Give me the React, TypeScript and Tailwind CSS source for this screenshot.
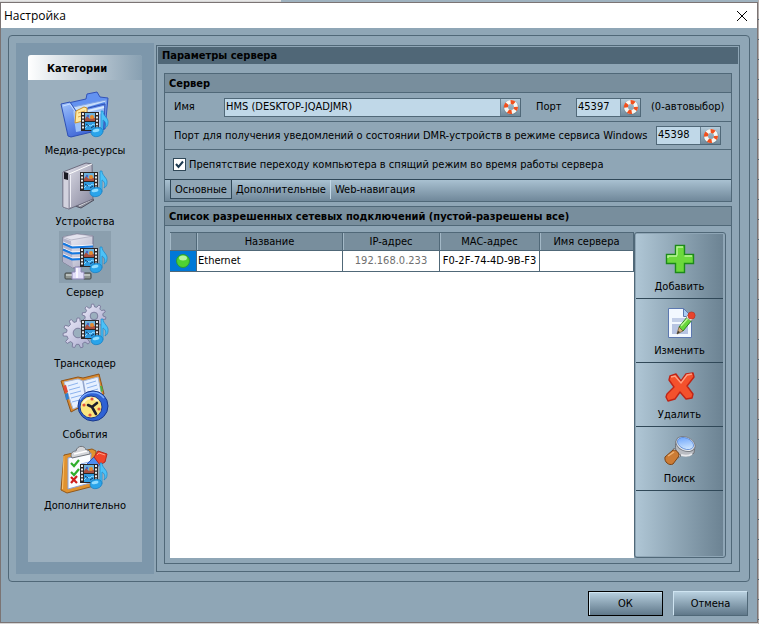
import { useState } from "react";
import type { ReactNode } from "react";

function MediaBadge({ x, y }: { x: number; y: number }) {
  return (
    <g transform={`translate(${x} ${y})`}>
      <rect x="0" y="0" width="18" height="19" fill="#2b2626" />
      <rect x="4" y="1" width="10" height="8" fill="#6db2dc" />
      <rect x="4" y="10" width="10" height="8" fill="#2f9be0" />
      <path d="M4 7l2-3 3 3 2-2 3 1v3H4z" fill="#a8503f" />
      <circle cx="11" cy="5" r="2" fill="#e8892c" />
      <circle cx="7" cy="4" r="1.2" fill="#4d62c8" />
      <path d="M4 16l3-3 3 1 2-2 2 1" stroke="#8ad8ff" fill="none" />
      <path d="M5 12l3 2M10 16l3-2" stroke="#123e6c" />
      <path d="M2 1v17M16 1v17" stroke="#e9eaee" strokeWidth="2" strokeDasharray="2 1.4" />
      <path
        d="M20 -1h2c0 5 6 7 5 12 0 2-1 4-3 5 2-4 0-7-2-8v12h-2z"
        fill="#4cc2f7"
        stroke="#1a86c8"
        strokeWidth="0.7"
      />
      <ellipse cx="16" cy="20" rx="6" ry="4.600" transform="rotate(-14 16 20)" fill="#2aa4ea" stroke="#1a7fc2" strokeWidth="0.7" />
      <ellipse cx="15" cy="18.500" rx="3.500" ry="1.600" transform="rotate(-14 15 18.500)" fill="#8fdcff" />
    </g>
  );
}

function FolderIcon() {
  return (
    <svg width="52" height="52" viewBox="0 0 52 52">
      <defs>
        <linearGradient id="folder" x1="0" y1="0" x2="0.6" y2="1">
          <stop offset="0" stopColor="#a4c6fb" />
          <stop offset="0.5" stopColor="#668fec" />
          <stop offset="1" stopColor="#3a5fd0" />
        </linearGradient>
      </defs>
      <path d="M9 14L27 10l1-5 10-2 3 5 8 1-3 31-36 7z" fill="#6392f0" stroke="#3353b8" />
      <path d="M14 18L47 11l-2 28-29 4z" fill="#c5dcfb" stroke="#7fa3e4" />
      <path d="M29 19l17-5M31 23l14-4" stroke="#4f82e6" strokeWidth="2" />
      <path d="M2 15l9-2 6 9 29-7-1 25-33 8-3-1z" fill="url(#folder)" stroke="#2e50b5" />
      <path d="M14 22l4 1 27-6-1 21-27 5z" fill="#9dc1f8" />
      <path d="M29 22l16-4M30 26l14-3" stroke="#d8eaff" strokeWidth="2" />
      <path d="M4 17l7-2 6 9" stroke="#c8deff" fill="none" />
      <path d="M17 22l8-4 3 1v12l-12 3z" fill="#ffe9a0" stroke="#c9922e" />
      <path d="M19 24l7-2M19 28l6-2" stroke="#d9a545" />
      <MediaBadge x={22} y={23} />
    </svg>
  );
}

function DeviceIcon() {
  return (
    <svg width="52" height="52" viewBox="0 0 52 52">
      <defs>
        <linearGradient id="drive" x1="0" y1="0" x2="1" y2="1">
          <stop offset="0" stopColor="#e4e4ee" />
          <stop offset="0.5" stopColor="#b4b4c4" />
          <stop offset="1" stopColor="#85859c" />
        </linearGradient>
      </defs>
      <path d="M16 46l15-8 4 2-13 8z" fill="#8d8f9c" stroke="#4d4f5e" />
      <path d="M20 46l12-6" stroke="#e3e3ea" />
      <path d="M4 12L27 3l6 1 1 35L10 49l-6-2z" fill="url(#drive)" stroke="#6d6d80" />
      <path d="M4 12l6 2v35l-6-2z" fill="#d2d2de" stroke="#78788c" strokeWidth="0.7" />
      <path d="M10 14L33 4" stroke="#ffffff" />
      <path d="M5 12l4 1v7l-4-1z" fill="#1a1a24" />
      <path d="M11.500 15v32" stroke="#efeff6" />
      <MediaBadge x={21} y={12} />
    </svg>
  );
}

function ServerIcon() {
  return (
    <svg width="52" height="52" viewBox="0 0 52 52">
      <defs>
        <linearGradient id="srv" x1="0" y1="0" x2="1" y2="1">
          <stop offset="0" stopColor="#f4f4fb" />
          <stop offset="0.6" stopColor="#c9c9d9" />
          <stop offset="1" stopColor="#9c9cb4" />
        </linearGradient>
      </defs>
      <path d="M4 6l14-3 16 2v29l-20 3-10-6z" fill="url(#srv)" stroke="#74748e" />
      <path d="M4 7l8 3 2 27-10-6z" fill="#b3b3ca" />
      <path d="M4 6l14-3 16 2-22 4z" fill="#e3e3ee" stroke="#9c9cb0" strokeWidth="0.6" />
      <path d="M4 11l9 4 21-1M4 17l9 4 21-1M4 23l9 4 21-1" stroke="#f9faff" fill="none" />
      <path d="M4 12.500l9 4 21-1M4 18.500l9 4 21-1M4 24.500l9 4 21-1" stroke="#1478e0" strokeWidth="2" fill="none" />
      <rect x="6" y="42" width="8" height="6" rx="1" fill="#8f9693" stroke="#3f4442" />
      <rect x="24" y="42" width="8" height="6" rx="1" fill="#8f9693" stroke="#3f4442" />
      <path d="M16 36h6v5h3v7H13v-7h3z" fill="#e2defa" stroke="#8c86b4" />
      <path d="M7 44h6M25 44h6" stroke="#e6ebe8" />
      <path d="M18 37v10" stroke="#ffffff" strokeWidth="1.500" />
      <MediaBadge x={21} y={17} />
    </svg>
  );
}

function Gear({ cx, cy, r, teeth }: { cx: number; cy: number; r: number; teeth: number }) {
  const points: string[] = [];
  for (let i = 0; i < teeth; i++) {
    const base = (i / teeth) * Math.PI * 2;
    const step = (Math.PI * 2) / teeth;
    const corners: [number, number][] = [
      [0, 0.76],
      [0.15, 1],
      [0.45, 1],
      [0.6, 0.76],
    ];
    corners.forEach(([t, k]) => {
      const a = base + step * t;
      points.push(`${(cx + Math.cos(a) * r * k).toFixed(1)} ${(cy + Math.sin(a) * r * k).toFixed(1)}`);
    });
  }
  const h = r * 0.32;
  return (
    <path
      d={`M${points.join("L")}Z M${cx - h} ${cy}a${h} ${h} 0 1 0 ${h * 2} 0a${h} ${h} 0 1 0 ${-h * 2} 0Z`}
      fillRule="evenodd"
      fill="url(#gear)"
      stroke="#77779a"
      strokeWidth="0.9"
    />
  );
}

function TranscoderIcon() {
  return (
    <svg width="52" height="52" viewBox="0 0 52 52">
      <defs>
        <linearGradient id="gear" x1="0" y1="0" x2="1" y2="1">
          <stop offset="0" stopColor="#ecebfa" />
          <stop offset="1" stopColor="#a9a9cc" />
        </linearGradient>
      </defs>
      <Gear cx={35} cy={14} r={12} teeth={10} />
      <Gear cx={19} cy={31} r={15} teeth={11} />
      <MediaBadge x={22} y={18} />
    </svg>
  );
}

function EventsIcon() {
  return (
    <svg width="52" height="52" viewBox="0 0 52 52">
      <path d="M2 8l17-4 5 1 16-4 5 20-33 18z" fill="#d98a2e" stroke="#8f531a" />
      <path d="M5 9l14-3 5 2 15-4 4 20-29 12z" fill="#e6f0ff" stroke="#a9b8d6" />
      <path d="M24 8l4 23" stroke="#93a5cc" strokeWidth="1.5" />
      <path
        d="M9 13l10-3M10 17l11-3M11 21l11-3M12 25l11-3M13 29l11-3M27 11l10-3M28 15l10-3M29 19l10-3"
        stroke="#8db3ee"
      />
      <path d="M4 13l3-1 2 7-3 1z" fill="#e04a35" />
      <path d="M6 21l3-1 1 6-3 1z" fill="#2d7fd3" />
      <path d="M41 13l2 0 1 5-2 1z" fill="#4fb043" />
      <circle cx="34" cy="33" r="15" fill="#2f62d4" stroke="#17378c" />
      <path d="M21 27c4-8 17-11 24-2" stroke="#7fb0ff" strokeWidth="1.5" fill="none" />
      <circle cx="32" cy="34" r="11" fill="#fbe67f" stroke="#173a8e" />
      <path d="M24 31c2-6 10-8 15-3" stroke="#fff8cf" strokeWidth="2" fill="none" />
      <circle cx="25" cy="32" r="1.6" fill="#e2553b" />
      <circle cx="33" cy="26" r="1.6" fill="#e2553b" />
      <circle cx="40" cy="36" r="1.6" fill="#e2553b" />
      <circle cx="31" cy="42" r="1.6" fill="#e2553b" />
      <path d="M38 30l-5 4-4-2M33 34l4 7" stroke="#1d1d2c" strokeWidth="2.6" strokeLinecap="round" fill="none" />
    </svg>
  );
}

function ExtraIcon() {
  return (
    <svg width="52" height="52" viewBox="0 0 52 52">
      <path d="M5 11L33 5l4 2-2 35L8 49l-6-3z" fill="#e0922f" stroke="#93591a" />
      <path d="M5 12L3.500 45" stroke="#ffc56e" />
      <path d="M9 14l23-5-1 30-22 6z" fill="#fafcff" stroke="#8aa3dc" />
      <path d="M12 12c0-4 3-5 5-5 1-6 9-6 10-1 3 0 4 1 4 4l-18 4z" fill="#d4d6da" stroke="#70757c" />
      <path d="M15 10l13-3" stroke="#ffffff" strokeWidth="1.5" />
      <path d="M12 19l3 3 5-6M12 28l3 3 5-6" stroke="#2fae2c" strokeWidth="2.2" fill="none" />
      <path d="M12 33l6 6M18 32l-6 7" stroke="#cf1d1d" strokeWidth="2.2" />
      <path d="M22 20l8-2M22 29l6-2" stroke="#8fb2ee" />
      <path d="M27 21l8-8 7 6-8 9z" fill="#4f8df0" stroke="#2a53b8" />
      <path d="M35 13l4-6 9 3-2 8-5 3z" fill="#f0452c" stroke="#b52a1c" />
      <path d="M38 11l2-2 6 2" stroke="#ff9c80" fill="none" />
      <MediaBadge x={21} y={20} />
    </svg>
  );
}

function LifeRing() {
  return (
    <svg width="16" height="16" viewBox="0 0 16 16">
      <circle cx="8" cy="8.5" r="5.6" fill="none" stroke="#60707c" strokeWidth="4" opacity="0.5" />
      <circle cx="8" cy="8" r="5" fill="none" stroke="#f7f7f2" strokeWidth="4" />
      <circle
        cx="8"
        cy="8"
        r="5"
        fill="none"
        stroke="#f0501e"
        strokeWidth="4"
        strokeDasharray="3.927 3.927"
        strokeDashoffset="1"
      />
    </svg>
  );
}

function AddIcon() {
  return (
    <svg width="32" height="32" viewBox="0 0 32 32">
      <path d="M11.500 2.500h9v9h9v9h-9v9h-9v-9h-9v-9h9z" fill="#6cd93c" stroke="#1c8a1a" strokeWidth="1.4" />
      <path d="M13 12.500V4h6M4 15v-2h9M20.500 13H28" stroke="#b9f59a" strokeWidth="1.4" fill="none" />
    </svg>
  );
}

function EditIcon() {
  return (
    <svg width="32" height="32" viewBox="0 0 32 32">
      <path d="M4.500 1.500h15l8 8v21h-23z" fill="#f2f8ff" stroke="#5c78b0" />
      <path d="M19.500 1.500v8h8z" fill="#a9cdf5" stroke="#5c78b0" />
      <rect x="8" y="11" width="14" height="4" fill="#c3cfe8" />
      <rect x="8" y="17" width="16" height="10" fill="#b7c4e2" />
      <path d="M15 20l9-11 4 4-9 11z" fill="#67d63a" stroke="#267d1d" />
      <path d="M17 19l8-9" stroke="#bdf598" strokeWidth="1.5" />
      <path d="M13 27l2-7 4 4z" fill="#d6b17c" stroke="#6b5330" strokeWidth="0.7" />
      <path d="M13 27l1-3 2 1z" fill="#333333" />
      <path d="M22 10l3-3 4 5-2 2z" fill="#f3f3f3" stroke="#8a8a8a" strokeWidth="0.6" />
      <circle cx="27.500" cy="8.500" r="3.600" fill="#e8432c" stroke="#b32b1b" strokeWidth="0.6" />
    </svg>
  );
}

function DeleteIcon() {
  return (
    <svg width="32" height="32" viewBox="0 0 32 32">
      <path
        d="M6 5l6-2 5 7 5-7 7-1 1 4-7 9 6 8-1 4-6 1-6-7-5 7-7 2-2-4 1-3 7-7-5-7z"
        fill="#f4512c"
        stroke="#c02416"
        strokeWidth="1.4"
        strokeLinejoin="round"
      />
      <path d="M7 6l4-1 6 7 6-8 5-1" stroke="#ffa183" strokeWidth="1.4" fill="none" />
    </svg>
  );
}

function SearchIcon() {
  return (
    <svg width="32" height="32" viewBox="0 0 32 32">
      <defs>
        <linearGradient id="lens" x1="0" y1="0" x2="1" y2="1">
          <stop offset="0" stopColor="#5e9bfb" />
          <stop offset="1" stopColor="#e6f5ff" />
        </linearGradient>
      </defs>
      <path d="M12 6c-1 6-1 11 4 14 6 2 11 1 14-2l1-8z" fill="#b9bcc2" stroke="#6f7278" />
      <path d="M17 20c4 1 8 1 11-1" stroke="#e8eaee" strokeWidth="2" fill="none" />
      <path d="M10 13l7 8-3 2-6-6z" fill="#eceef2" stroke="#777b82" />
      <path d="M1 22l8-7c4 0 6 3 6 6l-6 8c-4 2-9-2-8-7z" fill="#cc7c35" stroke="#7a4315" />
      <path d="M4 21l6-4" stroke="#f0b375" strokeWidth="1.5" />
      <ellipse cx="21.500" cy="9" rx="10" ry="7" transform="rotate(24 21.500 9)" fill="#e8eaee" stroke="#7b8088" />
      <ellipse cx="21.500" cy="8.500" rx="8.500" ry="5.500" transform="rotate(24 21.500 8.500)" fill="url(#lens)" stroke="#4d7fd0" strokeWidth="0.7" />
    </svg>
  );
}

const categories = [
  { label: "Медиа-ресурсы", icon: <FolderIcon /> },
  { label: "Устройства", icon: <DeviceIcon /> },
  { label: "Сервер", icon: <ServerIcon /> },
  { label: "Транскодер", icon: <TranscoderIcon /> },
  { label: "События", icon: <EventsIcon /> },
  { label: "Дополнительно", icon: <ExtraIcon /> },
];

const actions = [
  { label: "Добавить", icon: <AddIcon /> },
  { label: "Изменить", icon: <EditIcon /> },
  { label: "Удалить", icon: <DeleteIcon /> },
  { label: "Поиск", icon: <SearchIcon /> },
];

const tabs = ["Основные", "Дополнительные", "Web-навигация"];

function ResetField({ id, value, className }: { id: string; value: string; className: string }) {
  return (
    <div className={`flex h-[19px] border border-[#506878] bg-[#c0d8e8] ${className}`}>
      <input id={id} defaultValue={value} className="w-0 min-w-0 flex-1 bg-transparent pb-px pl-px outline-none" />
      <button
        aria-label="По умолчанию"
        className="flex w-5 items-center justify-center border-l border-[#6a8292] bg-linear-to-b from-[#b4cbda] to-[#70899a]"
      >
        <LifeRing />
      </button>
    </div>
  );
}

function GroupTitle({ children }: { children: ReactNode }) {
  return (
    <h3 className="h-[19px] shrink-0 truncate border-b border-[#506878] bg-[#788e9d] pl-1 leading-[19px] font-bold">
      {children}
    </h3>
  );
}

export default function App() {
  const [category, setCategory] = useState("Сервер");
  const [tab, setTab] = useState("Основные");

  return (
    <div className="flex min-h-screen flex-col bg-[repeating-linear-gradient(to_bottom,#b4aeac_0_19px,#506878_19px_20px)] pr-px font-['DejaVu_Sans_Condensed','DejaVu_Sans',sans-serif] text-[11px] leading-4 text-black">
      {/* Edge of the window behind the dialog */}
      <div className="flex h-[2px] shrink-0">
        <div className="w-[281px] bg-linear-to-b from-[#eeeeee] to-[#cfcfcf]" />
        <div className="flex-1 bg-[#9fb2bf]" />
      </div>

      <div className="flex flex-1 flex-col border border-[#7b7474] bg-[#8fa6b6]">
        {/* Title bar */}
        <div className="flex h-[25px] shrink-0 items-center justify-between bg-white pr-[9px] pl-[3px]">
          <h1 className="font-['Open_Sans','Noto_Sans',sans-serif] text-[12px]">Настройка</h1>
          <button aria-label="Закрыть">
            <svg width="12" height="12" viewBox="0 0 12 12">
              <path d="M1 1l10 10M11 1L1 11" stroke="#000000" />
            </svg>
          </button>
        </div>

        <div className="mx-[7px] mt-[7px] flex flex-1 rounded-[4px] border border-[#506878] p-[7px] pr-[9px]">
          {/* Categories */}
          <nav className="flex w-[138px] shrink-0 flex-col bg-[#7d97ab] p-3">
            <div className="flex flex-1 flex-col rounded-t-[3px] bg-[#9bafbe]">
              <h2 className="h-[25px] rounded-t-[3px] bg-linear-to-r from-white to-[#88a0b2] pr-4 text-center leading-[27px] font-bold">
                Категории
              </h2>
              <div className="flex flex-col items-center pt-[9px]">
                {categories.map((item) => (
                  <button
                    key={item.label}
                    onClick={() => setCategory(item.label)}
                    className="flex h-[71px] flex-col items-center gap-[2px] whitespace-nowrap"
                  >
                    <span className={item.label === category ? "bg-[#8b9fae]" : ""}>{item.icon}</span>
                    <span>{item.label}</span>
                  </button>
                ))}
              </div>
            </div>
          </nav>

          {/* Server settings */}
          <main className="my-[2px] ml-[2px] flex min-w-0 flex-1 flex-col border border-[#506878] p-px">
            <h2 className="h-[17px] shrink-0 bg-[#506777] pl-1 leading-[18px] font-bold">Параметры сервера</h2>

            <div className="mx-[6px] mt-[9px] mb-[6px] flex flex-1 flex-col gap-1">
              <section className="border border-[#506878]">
                <GroupTitle>Сервер</GroupTitle>
                <div className="flex h-[29px] items-center border-b border-[#506878] pr-[6px] pl-[9px]">
                  <label htmlFor="server-name" className="w-[50px]">
                    Имя
                  </label>
                  <ResetField id="server-name" value="HMS (DESKTOP-JQADJMR)" className="min-w-0 flex-1" />
                  <label htmlFor="server-port" className="ml-[15px] w-10">
                    Порт
                  </label>
                  <ResetField id="server-port" value="45397" className="w-[65px]" />
                  <span className="ml-[10px] w-[74px] whitespace-nowrap">(0-автовыбор)</span>
                </div>
                <div className="flex h-7 items-center justify-between border-b border-[#506878] pr-[10px] pl-[9px]">
                  <label htmlFor="dmr-port" className="whitespace-nowrap">
                    Порт для получения уведомлений о состоянии DMR-устройств в режиме сервиса Windows
                  </label>
                  <ResetField id="dmr-port" value="45398" className="w-[65px]" />
                </div>
                <div className="flex h-[29px] items-center pl-2">
                  <label className="flex items-center gap-[3px] whitespace-nowrap">
                    <input type="checkbox" defaultChecked className="peer sr-only" />
                    <span className="flex h-[13px] w-[13px] items-center justify-center border border-[#304858] bg-white text-transparent peer-checked:text-[#1d3a50]">
                      <svg width="9" height="9" viewBox="0 0 9 9">
                        <path d="M1 4l2.500 3L8 1.500" stroke="currentColor" strokeWidth="2" fill="none" />
                      </svg>
                    </span>
                    Препятствие переходу компьютера в спящий режим во время работы сервера
                  </label>
                </div>
                <div
                  role="tablist"
                  className="flex h-[22px] border-t border-[#304858] bg-linear-to-b from-[#a9c1d1] to-[#70889a] pl-[5px]"
                >
                  {tabs.map((name) => (
                    <button
                      key={name}
                      role="tab"
                      aria-selected={name === tab}
                      onClick={() => setTab(name)}
                      className={`h-[19px] px-1 whitespace-nowrap ${
                        name === tab
                          ? "border-x border-b border-[#304858] bg-[#8fa6b6] pt-px"
                          : "border-r border-[#c3d8e6] last:border-0"
                      }`}
                    >
                      {name}
                    </button>
                  ))}
                </div>
              </section>

              <section className="flex flex-1 flex-col border border-[#506878]">
                <GroupTitle>Список разрешенных сетевых подключений (пустой-разрешены все)</GroupTitle>
                <div className="mx-[5px] mt-[6px] mb-[5px] flex flex-1">
                  <div className="flex-1 bg-white">
                    <table className="w-full table-fixed border-separate border-spacing-0">
                      <colgroup>
                        <col className="w-[27px]" />
                        <col />
                        <col className="w-[97px]" />
                        <col className="w-[100px]" />
                        <col className="w-[94px]" />
                      </colgroup>
                      <thead>
                        <tr className="h-[19px] bg-[#788e9d] whitespace-nowrap">
                          {["", "Название", "IP-адрес", "MAC-адрес", "Имя сервера"].map((name) => (
                            <th
                              key={name}
                              className="border-y border-r border-[#506878] p-0 font-normal shadow-[inset_1px_0_#a3b8c6]"
                            >
                              {name}
                            </th>
                          ))}
                        </tr>
                      </thead>
                      <tbody>
                        <tr className="h-[21px] whitespace-nowrap">
                          <td className="border-r border-b border-[#506878] bg-[#0078d7] p-0">
                            <svg width="14" height="14" viewBox="0 0 14 14" className="mx-auto">
                              <circle cx="7" cy="7" r="6.500" fill="#4fd233" stroke="#2c9a34" />
                              <ellipse cx="7" cy="4" rx="4" ry="2.500" fill="#b4f2a0" />
                            </svg>
                          </td>
                          <td className="border-r border-b border-[#506878] p-0 pl-px">Ethernet</td>
                          <td className="border-r border-b border-[#506878] p-0 text-center text-[#707070]">
                            192.168.0.233
                          </td>
                          <td className="border-r border-b border-[#506878] p-0 text-center">F0-2F-74-4D-9B-F3</td>
                          <td className="border-r border-b border-[#506878] p-0" />
                        </tr>
                      </tbody>
                    </table>
                  </div>

                  {/* Actions */}
                  <div className="flex w-[92px] shrink-0 rounded-[3px] border border-[#506878] p-px pr-[2px]">
                    <div className="flex flex-1 flex-col bg-linear-to-r from-[#afc6d5] to-[#6c8393] pt-px">
                      {actions.map((item) => (
                        <button
                          key={item.label}
                          className="flex h-16 flex-col items-center gap-1 border-b border-[#304858] pt-2"
                        >
                          {item.icon}
                          <span>{item.label}</span>
                        </button>
                      ))}
                    </div>
                  </div>
                </div>
              </section>
            </div>
          </main>
        </div>

        {/* Dialog buttons */}
        <div className="flex justify-end gap-[10px] pt-[9px] pr-[9px] pb-[6px]">
          <button className="h-[25px] w-[75px] border border-black bg-linear-to-b from-[#b9d1e0] to-[#60788a] shadow-[inset_1px_1px_#cfe4f1]">
            ОК
          </button>
          <button className="h-[25px] w-[75px] border border-t-[#cfe4f1] border-r-[#506878] border-b-[#506878] border-l-[#cfe4f1] bg-linear-to-b from-[#b9d1e0] to-[#60788a]">
            Отмена
          </button>
        </div>
      </div>
      <div className="h-px shrink-0 bg-[#d4d4d4]" />
    </div>
  );
}
